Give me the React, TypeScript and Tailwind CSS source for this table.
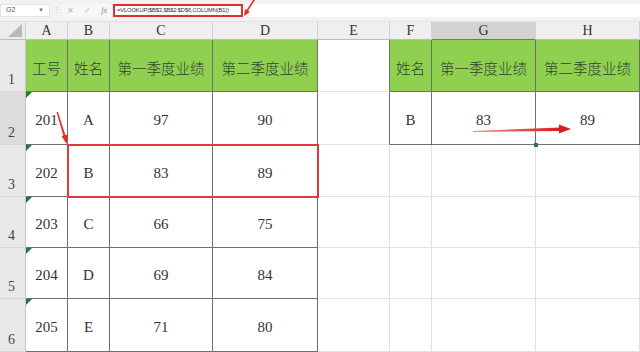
import React from "react";

const cols = ["A", "B", "C", "D", "E", "F", "G", "H"];
const data: string[][] = [
  ["工号", "姓名", "第一季度业绩", "第二季度业绩", "", "姓名", "第一季度业绩", "第二季度业绩"],
  ["201", "A", "97", "90", "", "B", "83", "89"],
  ["202", "B", "83", "89", "", "", "", ""],
  ["203", "C", "66", "75", "", "", "", ""],
  ["204", "D", "69", "84", "", "", "", ""],
  ["205", "E", "71", "80", "", "", "", ""],
];

const inTable = (c: number, r: number) =>
  (c >= 0 && c <= 3 && r >= 0 && r <= 5) || (c >= 5 && c <= 7 && r >= 0 && r <= 1);

const serif = { fontFamily: '"Liberation Serif", "Noto Sans CJK SC", serif' };
const cjk = { fontFamily: '"Noto Sans CJK SC", "Liberation Serif", sans-serif' };

function Cell({ c, r }: { c: number; r: number }) {
  const text = data[r][c];
  const rightDark = inTable(c, r) || inTable(c + 1, r);
  const bottomDark = inTable(c, r) || inTable(c, r + 1);
  const green = r === 0 && inTable(c, r);
  const isCjk = r === 0;
  const marker = c === 0 && r >= 1;
  const selected = c === 6 && r === 1;
  return (
    <div
      className={[
        "relative flex items-center justify-center pt-[5px] border-r border-b",
        rightDark ? "border-r-[#6f6f6f]" : "border-r-[#e2e2e2]",
        bottomDark ? "border-b-[#6f6f6f]" : "border-b-[#e2e2e2]",
        green ? "bg-[#90d050]" : "bg-white",
        isCjk ? "text-[14.5px] text-[#35402f] font-light" : "text-[15px] text-[#333333]",
      ].join(" ")}
      style={isCjk ? cjk : serif}
    >
      {marker && (
        <div className="absolute left-0 top-0 w-0 h-0 border-t-[6px] border-r-[6px] border-t-[#1f7a3a] border-r-transparent" />
      )}
      {selected && (
        <div className="absolute right-[-3px] bottom-[-3px] w-[4px] h-[4px] bg-[#3b6e4d] z-10" />
      )}
      {text}
    </div>
  );
}

export default function App() {
  return (
    <div className="relative w-[640px] h-[352px] overflow-hidden bg-white">
      {/* formula bar */}
      <div className="h-[22px] bg-[#f2f2f2] flex items-start pt-[4px] border-b border-b-[#e0e0e0]">
        <div className="w-[50px] h-[13px] bg-white border border-[#e3e3e3] flex items-center justify-between px-[5px] text-[7px] text-[#555]" style={{ fontFamily: '"Liberation Sans", sans-serif' }}>
          <span>G2</span>
          <span className="text-[6px] text-[#777]">▼</span>
        </div>
        <div className="w-[12px] h-[13px] flex items-center justify-center text-[7px] text-[#bbb]">⋮</div>
        <div className="w-[50px] h-[13px] flex items-center justify-around text-[8px] text-[#b5b5b5] bg-[#f7f7f7]" style={{ fontFamily: '"Liberation Sans", sans-serif' }}>
          <span>✕</span>
          <span>✓</span>
          <span className="italic text-[#888]" style={{ fontFamily: '"Liberation Serif", serif' }}>fx</span>
        </div>
        <div className="flex-1 h-[13px] bg-white ml-[1px] flex items-center">
          <div className="h-[13px] w-[130px] border-2 border-[#e0312f] flex items-center pl-[2px] text-[5.8px] tracking-[-0.15px] text-[#333] whitespace-nowrap" style={{ fontFamily: '"Liberation Sans", sans-serif' }}>
            =VLOOKUP($B$3,$B$2:$D$6,COLUMN(B1))
          </div>
        </div>
      </div>
      {/* grid */}
      <div className="grid grid-cols-[26px_42px_42px_103px_105px_72px_42px_104px_104px] grid-rows-[18px_52px_53px_52px_51px_51px_53px]">
        <div className="relative bg-[#ececec] border-r border-b border-r-[#cfcfcf] border-b-[#bdbdbd]">
          <div className="absolute right-[3px] bottom-[2px] w-0 h-0 border-l-[14px] border-b-[13px] border-l-transparent border-b-[#b8b8b8]" />
        </div>
        {cols.map((l, i) => (
          <div
            key={l}
            className={[
              "flex items-center justify-center text-[14px] text-[#333] border-r border-b border-r-[#d3d3d3]",
              i === 6 ? "bg-[#d2d2d2] border-b-[#4f8a5f]" : "bg-[#efefef] border-b-[#bdbdbd]",
            ].join(" ")}
            style={serif}
          >
            {l}
          </div>
        ))}
        {data.map((row, r) => (
          <React.Fragment key={r}>
            <div
              className={[
                "flex items-end pl-[8px] pb-[1px] text-[14px] text-[#444] border-r border-b border-r-[#c4c4c4] border-b-[#d6d6d6]",
                r === 1 ? "bg-[#dcdcdc]" : "bg-[#e9e9e9]",
              ].join(" ")}
              style={serif}
            >
              {r + 1}
            </div>
            {row.map((_, c) => (
              <Cell key={c} c={c} r={r} />
            ))}
          </React.Fragment>
        ))}
      </div>
      {/* red highlight box on row 3 */}
      <div className="absolute left-[67px] top-[144px] w-[252px] h-[54px] border-2 border-[#e2393a] pointer-events-none" />
      {/* arrows */}
      <svg className="absolute left-0 top-0 pointer-events-none" width="640" height="352" viewBox="0 0 640 352">
        <defs>
          <linearGradient id="ag" x1="0" y1="0" x2="1" y2="0">
            <stop offset="0" stopColor="#f08a8a" />
            <stop offset="1" stopColor="#d91e1e" />
          </linearGradient>
        </defs>
        <line x1="256" y1="-3" x2="247" y2="11" stroke="#e0312f" strokeWidth="1.6" />
        <polygon points="244,16 245,9 250,12" fill="#e0312f" />
        <polygon points="56.5,112 58,112 66,137 64,138" fill="#e0312f" />
        <polygon points="66.5,144 61.5,136 68,134.5" fill="#e0312f" />
        <polygon points="473,131 560,127.5 560,131 473,132" fill="url(#ag)" />
        <polygon points="571,129 559,124.5 559,133.5" fill="#d91e1e" />
      </svg>
    </div>
  );
}
